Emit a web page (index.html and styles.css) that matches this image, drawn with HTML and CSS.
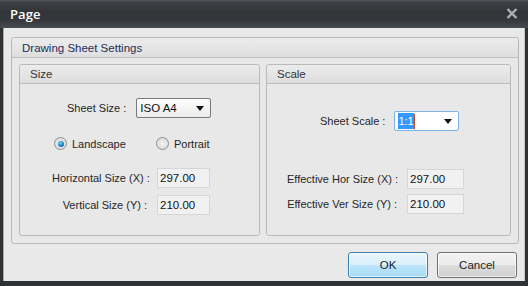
FILE: index.html
```html
<!DOCTYPE html>
<html>
<head>
<meta charset="utf-8">
<link rel="stylesheet" href="styles.css">
</head>
<body>
<div class="window">
  <div class="titlebar">
    <span class="title">Page</span>
    <svg class="close" width="12" height="11" viewBox="0 0 12 11"><path d="M1.5 1 L10.5 10 M10.5 1 L1.5 10" stroke="#aab0b8" stroke-width="2.4" fill="none"/></svg>
  </div>
  <div class="client">
    <div class="group outer">
      <div class="ghead outer-head">Drawing Sheet Settings</div>
      <div class="outer-body">
        <div class="group size">
          <div class="ghead">Size</div>
          <div class="gbody size-body">
            <div class="row sheet-row">
              <span class="lbl">Sheet Size :</span>
              <div class="combo combo-size"><span>ISO A4</span><span class="arrow"></span></div>
            </div>
            <div class="row radio-row">
              <label class="radio"><span class="dot on"></span>Landscape</label>
              <label class="radio"><span class="dot"></span>Portrait</label>
            </div>
            <div class="fields size-fields">
              <span class="lbl r">Horizontal Size (X) :</span><span class="field">297.00</span>
              <span class="lbl r">Vertical Size (Y) :</span><span class="field">210.00</span>
            </div>
          </div>
        </div>
        <div class="group scale">
          <div class="ghead">Scale</div>
          <div class="gbody scale-body">
            <div class="row scale-row">
              <span class="lbl">Sheet Scale :</span>
              <div class="combo combo-scale"><span class="sel">1:1</span><span class="caret"></span><span class="arrow"></span></div>
            </div>
            <div class="fields scale-fields">
              <span class="lbl r">Effective Hor Size (X) :</span><span class="field">297.00</span>
              <span class="lbl r">Effective Ver Size (Y) :</span><span class="field">210.00</span>
            </div>
          </div>
        </div>
      </div>
    </div>
    <div class="buttons">
      <button class="btn ok">OK</button>
      <button class="btn cancel">Cancel</button>
    </div>
  </div>
</div>
</body>
</html>
```
FILE: styles.css
```css
* { box-sizing: border-box; }
html, body { margin: 0; padding: 0; }
body {
  width: 528px; height: 286px; overflow: hidden;
  background: #2b2d31;
  font-family: "Liberation Sans", Arial, sans-serif;
  font-size: 11px;
  color: #262626;
}
.window { width: 528px; height: 286px; display: flex; flex-direction: column; background: #2f3135; }
.titlebar {
  height: 28px; display: flex; align-items: center; justify-content: space-between;
  padding: 0 10px 0 10px;
  background: linear-gradient(#55585d 0px, #3e4145 2px, #323438 12px, #35383c 20px, #45484d 27px, #4a4d52 28px);
}
.title { color: #fff; font-family: "Open Sans", sans-serif; font-size: 13px; font-weight: 600; letter-spacing: 0.1px; margin-top: -1px; }
.close { margin-right: 0; margin-top: -1px; }
.client {
  margin: 0 3px; height: 253px; background: #e9e9e9;
  border-left: 1px solid #a9a9a9; border-right: 1px solid #c8c8c8;
  padding: 9px 6px 0 7px;
  display: flex; flex-direction: column;
}
.group { border: 1px solid #b9b9b9; border-radius: 3px; background: #e8e8e8; display: flex; flex-direction: column; }
.ghead {
  height: 20px; padding-left: 10px; display: flex; align-items: center;
  background: linear-gradient(#ececec, #dedede);
  border-bottom: 1px solid #bdbdbd; border-radius: 3px 3px 0 0;
  color: #333; font-size: 11.5px;
}
.outer { width: 508px; height: 207px; }
.outer-head { color: #22305a; height: 20px; }
.outer-body { display: flex; gap: 6px; padding: 6px 7px 0 7px; }
.size { width: 241px; height: 172px; }
.scale { width: 245px; height: 172px; }
.size .ghead, .scale .ghead { height: 19px; }
.gbody { flex: 1; display: flex; flex-direction: column; }
.row { display: flex; align-items: center; }
.lbl { white-space: nowrap; }
.sheet-row { padding: 14px 0 0 47px; gap: 10px; }
.combo {
  height: 20px; border: 1px solid #7a7a7a; border-radius: 2px;
  background: linear-gradient(#fdfdfd, #ececec);
  display: flex; align-items: center; padding: 0 6px 0 3px; color: #111;
  position: relative;
}
.combo-size { width: 75px; justify-content: space-between; font-size: 11.5px; }
.arrow { width: 0; height: 0; border-left: 4px solid transparent; border-right: 4px solid transparent; border-top: 5px solid #111; margin-left: auto; }
.radio-row { padding: 19px 0 0 34px; gap: 0; }
.radio { display: flex; align-items: center; gap: 5px; }
.radio:first-child { width: 102px; }
.dot {
  width: 13px; height: 13px; border-radius: 50%;
  border: 1px solid #8e8f8f;
  background: radial-gradient(circle, #f4f4f4 0, #dcdcdc 70%);
  position: relative;
}
.dot.on::after {
  content: ""; position: absolute; left: 2.5px; top: 2.5px; width: 6px; height: 6px; border-radius: 50%;
  background: radial-gradient(circle at 40% 35%, #7fd0f6 0, #1b80c4 55%, #0b4f8a 100%);
}
.fields { display: grid; align-items: center; }
.size-fields { grid-template-columns: 95px 53px; column-gap: 10px; row-gap: 7px; padding: 18px 0 0 32px; }
.r { text-align: right; }
.field {
  height: 20px; border: 1px solid #d6d6d6; background: #f1f1f1; color: #111;
  display: flex; align-items: center; padding-left: 2px; font-size: 11.5px;
}
.scale-row { padding: 27px 0 0 53px; gap: 9px; }
.combo-scale { width: 65px; border-color: #7fb4e6; background: #fff; padding-left: 3px; }
.sel { background: #3399ff; color: #fff; padding: 1px 0; line-height: 14px; }
.caret { width: 1px; height: 15px; background: #c0471b; }
.scale-fields { grid-template-columns: 110px 57px; column-gap: 10px; row-gap: 5px; padding: 38px 0 0 20px; }
.scale-fields .field { height: 20px; }
.buttons { display: flex; justify-content: flex-end; gap: 9px; padding: 8px 1px 0 0; }
.btn {
  font-family: "Liberation Sans", Arial, sans-serif; font-size: 11.5px; color: #222;
  width: 80px; height: 26px; border-radius: 3px; padding: 0;
  border: 1px solid #707070;
  background: linear-gradient(#f3f3f3 0, #ebebeb 50%, #dddddd 51%, #cfcfcf 100%);
  box-shadow: inset 0 0 0 1px rgba(255,255,255,0.7);
}
.ok {
  border-color: #3c7fb1;
  background: linear-gradient(#eaf6fd 0, #d9f0fc 50%, #bee6fd 51%, #a7d9f5 100%);
}
```
